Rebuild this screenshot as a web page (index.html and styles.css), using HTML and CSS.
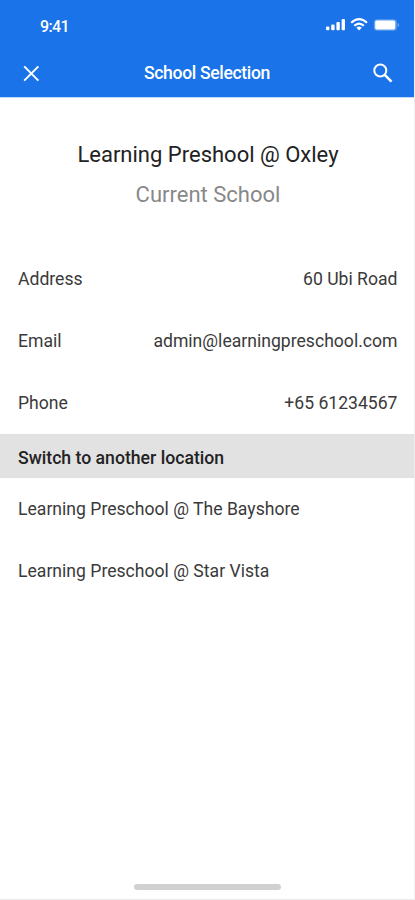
FILE: index.html
```html
<!DOCTYPE html>
<html lang="en">
<head>
<meta charset="utf-8">
<title>School Selection</title>
<link rel="stylesheet" href="styles.css">
</head>
<body>
<div class="screen">
  <header class="header">
    <div class="status">
      <span class="time">9:41</span>
      <svg class="indicators" width="74" height="16" viewBox="0 0 74 16" fill="#fff">
        <rect x="0" y="9.5" width="3.4" height="3.7" rx="1"/><rect x="5.2" y="7.5" width="3.4" height="5.7" rx="1"/><rect x="10.4" y="5" width="3.4" height="8.2" rx="1"/><rect x="15.6" y="2" width="3.4" height="11.2" rx="1"/>
        <g fill="none" stroke="#fff" stroke-width="2.2"><path d="M25.2 5.7Q33.1 -1.6 41 5.7"/><path d="M28.3 8.8Q33.1 4.4 37.9 8.8"/></g><path d="M30.4 10.7Q33.1 8.5 35.8 10.7L33.1 13.4Z"/>
        <rect x="47.8" y="2.2" width="23" height="11.6" rx="3.2" opacity=".3"/><rect x="49.2" y="3.6" width="20" height="8.8" rx="1.6"/><path d="M71.6 6Q73.3 6.5 73.3 8T71.6 10Z" opacity=".35"/>
      </svg>
    </div>
    <div class="bar">
      <svg class="icon" width="24" height="24" viewBox="0 0 24 24"><path d="M5.2 5.4L19.4 19.6M19.4 5.4L5.2 19.6"/></svg>
      <h1 class="title">School Selection</h1>
      <svg class="icon" width="24" height="24" viewBox="0 0 24 24"><circle cx="9.3" cy="9.5" r="6"/><path d="M13.7 13.9L20.5 20.7" stroke-width="2.6"/></svg>
    </div>
  </header>
  <main>
    <section class="current">
      <h2 class="name">Learning Preshool @ Oxley</h2>
      <p class="caption">Current School</p>
    </section>
    <dl class="details">
      <div class="row"><dt>Address</dt><dd>60 Ubi Road</dd></div>
      <div class="row"><dt>Email</dt><dd>admin@learningpreschool.com</dd></div>
      <div class="row"><dt>Phone</dt><dd>+65 61234567</dd></div>
    </dl>
    <h3 class="section">Switch to another location</h3>
    <ul class="places">
      <li class="row">Learning Preschool @ The Bayshore</li>
      <li class="row">Learning Preschool @ Star Vista</li>
    </ul>
  </main>
  <div class="home"></div>
</div>
</body>
</html>
```
FILE: styles.css
```css
* { box-sizing: border-box; margin: 0; padding: 0; }
body { background: #fff; font-family: Roboto, sans-serif; color: #3a3a3a; }
.screen { width: 415px; height: 900px; display: flex; flex-direction: column; border-right: 1px solid #f0f0f0; border-bottom: 1px solid #ececec; }
main { flex: 1; }
.header { height: 98px; background: #1a73e8; color: #fff; border-bottom: 1px solid #c3dafa; }
.status { height: 49px; display: flex; justify-content: space-between; padding: 17px 14px 0 40px; }
.indicators { overflow: visible; }
.time { font-size: 16px; line-height: 20px; font-weight: 500; letter-spacing: -.6px; }
.bar { height: 48px; display: flex; justify-content: space-between; align-items: center; padding: 0 19px; }
.icon { fill: none; stroke: #fff; stroke-width: 2; }
.title { font-size: 17.6px; font-weight: 500; letter-spacing: -.35px; }
.current { height: 150px; padding: 40px 0 0 2px; text-align: center; }
.name { font-size: 22px; line-height: 34px; font-weight: 400; color: #222; }
.caption { font-size: 22px; line-height: 34px; margin-top: 6px; color: #888; }
.row { height: 62px; padding: 0 16.5px 0 18px; display: flex; align-items: center; justify-content: space-between; font-size: 17.6px; }
.section { height: 44px; line-height: 48px; padding-left: 18px; background: #e2e2e2; font-size: 17.65px; font-weight: 500; color: #222; }
.places { list-style: none; }
.home { width: 147px; height: 6px; border-radius: 3px; background: #d0d0d0; margin: 0 auto 9px; }
```
